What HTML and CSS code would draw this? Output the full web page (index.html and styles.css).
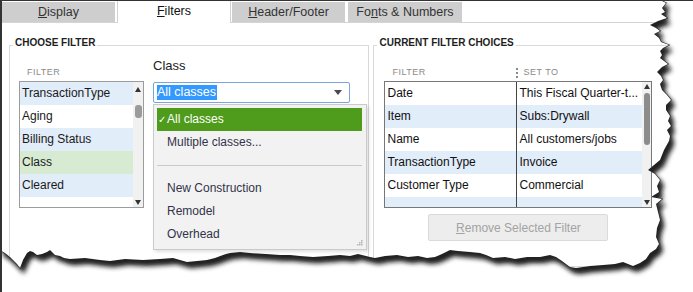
FILE: index.html
```html
<!DOCTYPE html>
<html lang="en">
<head>
    <meta charset="UTF-8">
    <title>Modify Report - Filters</title>
    <link rel="stylesheet" href="styles.css">
</head>
<body>
<div class="window">
    <div class="tabs">
        <div class="tab tab-display"><u>D</u>isplay</div>
        <div class="tab tab-filters active"><u>F</u>ilters</div>
        <div class="tab tab-header"><u>H</u>eader/Footer</div>
        <div class="tab tab-fonts">Fo<u>n</u>ts &amp; Numbers</div>
    </div>

    <div class="panel">
        <fieldset class="group group-choose">
            <legend>CHOOSE FILTER</legend>
            <div class="choose-body">
                <div class="filter-col">
                    <div class="col-head">FILTER</div>
                    <div class="list">
                        <div class="rows">
                            <div class="row blue">TransactionType</div>
                            <div class="row">Aging</div>
                            <div class="row blue">Billing Status</div>
                            <div class="row green">Class</div>
                            <div class="row blue">Cleared</div>
                        </div>
                        <div class="scroll">
                            <div class="arrow up"></div>
                            <div class="thumb"></div>
                            <div class="spacer"></div>
                            <div class="arrow down"></div>
                        </div>
                    </div>
                </div>
                <div class="class-col">
                    <div class="field-label">Class</div>
                    <div class="combo">
                        <span class="sel">All classes</span>
                        <svg class="caret" width="8" height="5" viewBox="0 0 8 5"><path d="M0 0h8L4 5z" fill="#4a4a4a"/></svg>
                        <div class="popup">
                            <div class="item picked"><span class="check">&#10003;</span>All classes</div>
                            <div class="item">Multiple classes...</div>
                            <div class="sep"></div>
                            <div class="item">New Construction</div>
                            <div class="item">Remodel</div>
                            <div class="item">Overhead</div>
                            <svg class="grip" width="7" height="7" viewBox="0 0 7 7">
                                <rect x="5" y="1" width="1.5" height="1.5" fill="#b5b5b5"/>
                                <rect x="3" y="3" width="1.5" height="1.5" fill="#b5b5b5"/>
                                <rect x="5" y="3" width="1.5" height="1.5" fill="#b5b5b5"/>
                                <rect x="1" y="5" width="1.5" height="1.5" fill="#b5b5b5"/>
                                <rect x="3" y="5" width="1.5" height="1.5" fill="#b5b5b5"/>
                                <rect x="5" y="5" width="1.5" height="1.5" fill="#b5b5b5"/>
                            </svg>
                        </div>
                    </div>
                </div>
            </div>
            <div class="next-legend">CLASS FILTER</div>
        </fieldset>

        <fieldset class="group group-current">
            <legend>CURRENT FILTER CHOICES</legend>
            <div class="current-body">
                <div class="table-head">
                    <span class="th th-filter">FILTER</span>
                    <span class="th th-set">
                        <svg width="2" height="10" viewBox="0 0 2 10"><rect y="0" width="2" height="2" fill="#8a8a8a"/><rect y="4" width="2" height="2" fill="#8a8a8a"/><rect y="8" width="2" height="2" fill="#8a8a8a"/></svg>
                        SET TO
                    </span>
                </div>
                <div class="table">
                    <div class="trows">
                        <div class="trow"><span class="cell">Date</span><span class="cell">This Fiscal Quarter-t...</span></div>
                        <div class="trow blue"><span class="cell">Item</span><span class="cell">Subs:Drywall</span></div>
                        <div class="trow"><span class="cell">Name</span><span class="cell">All customers/jobs</span></div>
                        <div class="trow blue"><span class="cell">TransactionType</span><span class="cell">Invoice</span></div>
                        <div class="trow"><span class="cell">Customer Type</span><span class="cell">Commercial</span></div>
                        <div class="trow blue stub"><span class="cell"></span><span class="cell"></span></div>
                    </div>
                    <div class="scroll scroll-table">
                        <div class="arrow up"></div>
                        <div class="thumb"></div>
                        <div class="spacer"></div>
                        <div class="arrow down"></div>
                    </div>
                </div>
                <button type="button" class="remove-btn" disabled><u>R</u>emove Selected Filter</button>
            </div>
        </fieldset>
    </div>

    <!-- torn paper edge over the cut-off part of the dialog -->
    <svg class="tear" width="693" height="292" viewBox="0 0 693 292">
        <defs>
            <filter id="soft" x="-5%" y="-5%" width="110%" height="110%">
                <feGaussianBlur stdDeviation="2.8"/>
            </filter>
            <path id="paper" d="M0 0 L660 0 L666 3 L662 8 L665 12 L661 14 L667 18 L658 21 L650 25 L656 28 L660 31 L654 34 L659 38 L661 42 L669 45 L663 48 L660 51 L662 55 L660 58 L664 61 L668 64 L662 67 L657 72 L661 76 L663 80 L660 84 L662 90 L667 95 L671 100 L666 105 L666 110 L670 116 L668 121 L671 126 L667 130 L670 136 L669 141 L664 150 L660 160 L654 165 L648 170 L655 174 L660 180 L657 186 L659 192 L651 197 L662 199 L656 204 L658 212 L660 220 L657 228 L656 237 L659 244 L656 249 L650 253 L646 259 L640 263 L633 266 L623 262 L615 264 L603 265 L590 266 L576 268 L570 267 L562 261 L556 257 L550 255 L540 257 L527 257 L515 259 L505 257 L493 258 L486 255 L480 253 L470 252 L458 251 L450 250 L442 254 L435 257 L427 258 L418 256 L408 257 L397 255 L385 256 L375 258 L370 257 L358 254 L350 256 L340 255 L328 256 L313 257 L300 256 L290 255 L280 255 L266 254 L250 253 L240 252 L230 253 L226 254 L223 255 L215 258 L207 260 L197 261 L187 262 L180 260 L173 258 L160 259 L143 260 L125 259 L110 261 L100 260 L85 258 L70 259 L64 258 L60 256 L55 255 L52 252 L50 250 L47 252 L42 254 L37 255 L33 252 L30 251 L27 253 L23 260 L20 268 L17 264 L15 262 L10 257 L5 253 L0 250 Z"/>
            <mask id="outside">
                <rect width="693" height="292" fill="#fff"/>
                <use href="#paper" fill="#000"/>
            </mask>
        </defs>
        <rect width="693" height="292" fill="#fff" mask="url(#outside)"/>
        <g mask="url(#outside)">
            <use href="#paper" fill="#141414" transform="translate(4 6)" filter="url(#soft)"/>
            <use href="#paper" fill="#2a2a2a" transform="translate(2 3)" filter="url(#soft)" opacity="0.7"/>
            <use href="#paper" fill="none" stroke="#222" stroke-width="1.2"/>
        </g>
    </svg>
</div>
</body>
</html>
```

FILE: styles.css
```css
/* modify report dialog, filters tab */
* {
    box-sizing: border-box;
}
body {
    margin: 0;
    font-family: "Liberation Sans", Arial, sans-serif;
    color: #1a1a1a;
    background-color: #fff;
}
.window {
    position: relative;
    width: 693px;
    height: 292px;
    overflow: hidden;
    background-color: #fff;
    border-top: 1px solid #333;
    border-left: 2px solid #333;
}

/* tabs */
.tabs {
    display: flex;
    align-items: flex-end;
    height: 22px;
    border-bottom: 1px solid #d4d4d4;
}
.tab {
    height: 20px;
    line-height: 20px;
    text-align: center;
    font-size: 12.5px;
    color: #333;
    background-color: #cecece;
}
.tab-display {
    width: 113px;
}
.tab-filters {
    width: 114px;
    margin-left: 2px;
}
.tab-header {
    width: 113px;
    margin-left: 1px;
}
.tab-fonts {
    width: 114px;
    margin-left: 3px;
}
.tab.active {
    position: relative;
    height: 22px;
    line-height: 21px;
    margin-bottom: -1px;
    background-color: #fff;
    color: #111;
    border-left: 1px solid #d2d2d2;
    border-right: 1px solid #d2d2d2;
}

/* groups */
.panel {
    display: flex;
    gap: 4px;
    padding: 14px 0 0 7px;
}
.group {
    margin: 0;
    padding: 0;
    border: 1px solid #d9d9d9;
    min-width: 0;
}
.group legend {
    margin-left: 3px;
    padding: 0 2px 5px;
    font-size: 10px;
    line-height: 12px;
    font-weight: bold;
    color: #1e1e1e;
}
.group-choose {
    width: 361px;
    height: 230px;
    position: relative;
}
.group-current {
    width: 320px;
}
.col-head {
    height: 11px;
    line-height: 11px;
    font-size: 9px;
    letter-spacing: 0.5px;
    color: #8a8a8a;
}

/* choose filter */
.choose-body {
    display: grid;
    grid-template-columns: 125px 197px;
    column-gap: 9px;
    padding: 4px 0 0 9px;
}
.filter-col .col-head {
    margin-top: 9px;
    margin-bottom: 3px;
    padding-left: 8px;
}
.list {
    display: flex;
    height: 127px;
    border: 1px solid #9c9c9c;
}
.rows {
    flex: 1;
}
.row {
    height: 23px;
    line-height: 23px;
    padding-left: 2px;
    font-size: 12px;
}
.blue {
    background-color: #e2edfa;
}
.green {
    background-color: #d7ead2;
}
.scroll {
    display: flex;
    flex-direction: column;
    align-items: center;
    width: 10px;
    background-color: #f1f1f1;
}
.arrow {
    height: 14px;
    width: 100%;
    display: flex;
    align-items: center;
    justify-content: center;
}
.arrow::before {
    content: "";
    border-left: 3.5px solid transparent;
    border-right: 3.5px solid transparent;
}
.arrow.up::before {
    border-bottom: 5px solid #333;
}
.arrow.down {
    align-items: flex-end;
    padding-bottom: 2px;
}
.arrow.down::before {
    border-top: 5px solid #333;
}
.thumb {
    width: 7px;
    height: 13px;
    margin-top: 9px;
    border-radius: 3px;
    background-color: #9b9b9b;
}
.spacer {
    flex: 1;
}

/* class combo */
.field-label {
    font-size: 13px;
    line-height: 16px;
    color: #222;
}
.combo {
    position: relative;
    display: flex;
    align-items: center;
    height: 21px;
    margin-top: 8px;
    padding-left: 3px;
    border: 1px solid #7ba5da;
    border-radius: 2px;
    background-color: #fff;
}
.sel {
    line-height: 15px;
    padding: 0 1px 0 0;
    font-size: 12.5px;
    color: #fff;
    background-color: #3399ff;
}
.caret {
    margin-left: auto;
    margin-right: 7px;
}
.popup {
    position: absolute;
    top: 21px;
    left: -1px;
    width: 214px;
    height: 146px;
    padding: 3px 4px 3px 3px;
    background-color: #f2f2f2;
    border: 1px solid #cacaca;
    box-shadow: 2px 2px 3px rgba(0, 0, 0, 0.12);
}
.item {
    height: 23px;
    line-height: 23px;
    padding-left: 10px;
    font-size: 12px;
    color: #33334a;
}
.item.picked {
    color: #fff;
    background-color: #4f9b1b;
}
.check {
    display: inline-block;
    width: 9px;
    margin-left: -9px;
    font-size: 10px;
}
.sep {
    height: 1px;
    margin: 11px 0;
    background-color: #c9c9c9;
}
.grip {
    position: absolute;
    right: 3px;
    bottom: 3px;
}
.next-legend {
    position: absolute;
    left: 15px;
    top: 214px;
    font-size: 10px;
    font-weight: bold;
    color: #1e1e1e;
}

/* current filter choices */
.current-body {
    display: flex;
    flex-direction: column;
    padding: 4px 0 10px 10px;
}
.table-head {
    display: flex;
    margin-top: 9px;
    margin-bottom: 3px;
    height: 11px;
    line-height: 11px;
    font-size: 9px;
    letter-spacing: 0.5px;
    color: #8a8a8a;
}
.th-filter {
    width: 132px;
    padding-left: 8px;
}
.th-set {
    display: flex;
    align-items: center;
    gap: 5px;
}
.table {
    display: flex;
    width: 268px;
    height: 127px;
    border: 1px solid #777;
}
.trows {
    flex: 1;
}
.trow {
    display: grid;
    grid-template-columns: 132px 1fr;
    height: 23px;
    line-height: 23px;
    font-size: 12px;
    color: #111;
}
.trow.stub {
    height: 10px;
}
.cell {
    padding-left: 2px;
    white-space: nowrap;
    overflow: hidden;
}
.cell:first-child {
    border-right: 1px solid #444;
}
.scroll-table {
    width: 9px;
}
.scroll-table .arrow {
    height: 9px;
}
.scroll-table .thumb {
    width: 6px;
    height: 52px;
    margin-top: 2px;
    background-color: #8c8c8c;
}
.remove-btn {
    align-self: flex-start;
    width: 180px;
    height: 27px;
    margin: 6px 0 0 44px;
    padding: 0;
    font-family: "Liberation Sans", Arial, sans-serif;
    font-size: 12px;
    color: #a3a3a3;
    background-color: #ededed;
    border: 1px solid #dadada;
    border-radius: 2px;
}

/* torn edge overlay */
.tear {
    position: absolute;
    top: -1px;
    left: -2px;
    pointer-events: none;
}
```
